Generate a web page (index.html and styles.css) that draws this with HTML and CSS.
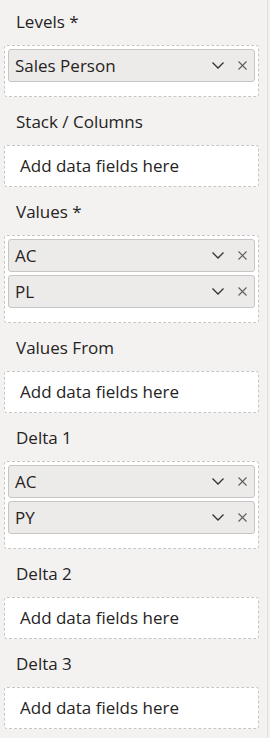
FILE: index.html
```html
<!DOCTYPE html>
<html>
<head>
<meta charset="utf-8">
<link rel="stylesheet" href="styles.css">
</head>
<body>
<div class="panel">
  <div class="section">
    <div class="label">Levels *</div>
    <div class="well filled">
      <div class="pill"><span class="name">Sales Person</span><span class="icons"><svg class="chev" width="12" height="7" viewBox="0 0 12 7"><path d="M0.5 0.5 L6 6 L11.5 0.5" fill="none" stroke="#323130" stroke-width="1.3"/></svg><svg class="x" width="9" height="9" viewBox="0 0 9 9"><path d="M0.5 0.5 L8.5 8.5 M8.5 0.5 L0.5 8.5" fill="none" stroke="#605e5c" stroke-width="1.1"/></svg></span></div>
    </div>
  </div>
  <div class="section">
    <div class="label">Stack / Columns</div>
    <div class="well empty">Add data fields here</div>
  </div>
  <div class="section">
    <div class="label">Values *</div>
    <div class="well filled">
      <div class="pill"><span class="name">AC</span><span class="icons"><svg class="chev" width="12" height="7" viewBox="0 0 12 7"><path d="M0.5 0.5 L6 6 L11.5 0.5" fill="none" stroke="#323130" stroke-width="1.3"/></svg><svg class="x" width="9" height="9" viewBox="0 0 9 9"><path d="M0.5 0.5 L8.5 8.5 M8.5 0.5 L0.5 8.5" fill="none" stroke="#605e5c" stroke-width="1.1"/></svg></span></div>
      <div class="pill"><span class="name">PL</span><span class="icons"><svg class="chev" width="12" height="7" viewBox="0 0 12 7"><path d="M0.5 0.5 L6 6 L11.5 0.5" fill="none" stroke="#323130" stroke-width="1.3"/></svg><svg class="x" width="9" height="9" viewBox="0 0 9 9"><path d="M0.5 0.5 L8.5 8.5 M8.5 0.5 L0.5 8.5" fill="none" stroke="#605e5c" stroke-width="1.1"/></svg></span></div>
    </div>
  </div>
  <div class="section">
    <div class="label">Values From</div>
    <div class="well empty">Add data fields here</div>
  </div>
  <div class="section">
    <div class="label">Delta 1</div>
    <div class="well filled">
      <div class="pill"><span class="name">AC</span><span class="icons"><svg class="chev" width="12" height="7" viewBox="0 0 12 7"><path d="M0.5 0.5 L6 6 L11.5 0.5" fill="none" stroke="#323130" stroke-width="1.3"/></svg><svg class="x" width="9" height="9" viewBox="0 0 9 9"><path d="M0.5 0.5 L8.5 8.5 M8.5 0.5 L0.5 8.5" fill="none" stroke="#605e5c" stroke-width="1.1"/></svg></span></div>
      <div class="pill"><span class="name">PY</span><span class="icons"><svg class="chev" width="12" height="7" viewBox="0 0 12 7"><path d="M0.5 0.5 L6 6 L11.5 0.5" fill="none" stroke="#323130" stroke-width="1.3"/></svg><svg class="x" width="9" height="9" viewBox="0 0 9 9"><path d="M0.5 0.5 L8.5 8.5 M8.5 0.5 L0.5 8.5" fill="none" stroke="#605e5c" stroke-width="1.1"/></svg></span></div>
    </div>
  </div>
  <div class="section">
    <div class="label">Delta 2</div>
    <div class="well empty">Add data fields here</div>
  </div>
  <div class="section">
    <div class="label">Delta 3</div>
    <div class="well empty">Add data fields here</div>
  </div>
</div>
</body>
</html>
```

FILE: styles.css
```css
html, body {
  margin: 0;
  padding: 0;
  background: #f3f2f1;
}
body {
  font-family: "Open Sans", "Noto Sans", sans-serif;
  color: #252423;
  width: 270px;
  height: 738px;
  overflow: hidden;
}
.panel {
  width: 268px;
  height: 738px;
  box-sizing: border-box;
  border-right: 1px solid #e1dfdd;
  padding: 11px 0 0 4px;
  display: flex;
  flex-direction: column;
  gap: 14px;
}
.section {
  display: flex;
  flex-direction: column;
}
.label {
  font-size: 17px;
  line-height: 22px;
  padding-left: 12px;
  height: 22px;
  margin-bottom: 12px;
  color: #252423;
}
.well {
  width: 255px;
  box-sizing: border-box;
  border: 1px dashed #c8c6c4;
  border-radius: 3px;
  background: #ffffff;
}
.well.empty {
  height: 42px;
  padding-left: 15px;
  font-size: 17px;
  line-height: 40px;
}
.well.filled {
  padding: 3px 3px 14px 3px;
  display: flex;
  flex-direction: column;
  gap: 3px;
}
.pill {
  height: 33px;
  box-sizing: border-box;
  background: #edebe9;
  border: 1px solid #c8c6c4;
  border-radius: 3px;
  display: flex;
  align-items: center;
  padding-left: 6px;
  padding-right: 7px;
  font-size: 17px;
}
.name {
  flex: 1;
}
.icons {
  display: flex;
  align-items: center;
  gap: 14px;
}
.chev, .x {
  display: block;
}
```
